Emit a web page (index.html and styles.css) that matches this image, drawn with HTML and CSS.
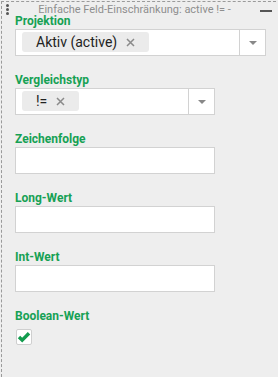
FILE: index.html
```html
<!DOCTYPE html>
<html>
	<head>
		<meta charset="utf-8">
		<link rel="stylesheet" href="styles.css">
	</head>
	<body>
		<div class="panel">
			<div class="head">
				<span class="grip"><i></i><i></i><i></i></span>
				<div class="title">Einfache Feld-Einschränkung: active != -</div>
				<span class="minus"></span>
			</div>

			<div class="field">
				<div class="label">Projektion</div>
				<div class="select wide">
					<div class="chips">
						<span class="chip">Aktiv (active)<svg class="x" width="9" height="9" viewBox="0 0 9 9"><path d="M1 1 L8 8 M8 1 L1 8"/></svg></span>
					</div>
					<div class="arrow"><span></span></div>
				</div>
			</div>

			<div class="field">
				<div class="label">Vergleichstyp</div>
				<div class="select">
					<div class="chips">
						<span class="chip">!=<svg class="x" width="9" height="9" viewBox="0 0 9 9"><path d="M1 1 L8 8 M8 1 L1 8"/></svg></span>
					</div>
					<div class="arrow"><span></span></div>
				</div>
			</div>

			<div class="field">
				<div class="label">Zeichenfolge</div>
				<input class="text" type="text">
			</div>

			<div class="field">
				<div class="label">Long-Wert</div>
				<input class="text" type="text">
			</div>

			<div class="field">
				<div class="label">Int-Wert</div>
				<input class="text" type="text">
			</div>

			<div class="field">
				<div class="label">Boolean-Wert</div>
				<div class="check">
					<svg width="14" height="14" viewBox="0 0 14 14">
						<path d="M2 7 L5.2 10.2 L12 3.2" fill="none" stroke="#129c4e" stroke-width="3.4"/>
					</svg>
				</div>
			</div>
		</div>
	</body>
</html>
```

FILE: styles.css
```css
html, body {
	margin: 0;
	height: 100%;
}

body {
	font-family: Roboto, "Liberation Sans", sans-serif;
	background: #eeeeee;
}

.panel {
	margin-left: 1px;
	margin-top: 1px;
	height: 376px;
	box-sizing: border-box;
	border-left: 1px dashed #9a9a9a;
	border-top: 1px dashed #9a9a9a;
	background: #eeeeee;
	padding-left: 13px;
	margin-right: 2px;
}

.head {
	position: relative;
	height: 11px;
}

.title {
	font-size: 11px;
	line-height: 12px;
	padding-top: 2px;
	color: #8e8e8e;
	text-align: center;
	padding-right: 30px;
	padding-left: 8px;
	white-space: nowrap;
}

/* drag handle */
.grip {
	position: absolute;
	left: -9px;
	top: 2px;
	width: 3px;
}
.grip i {
	display: block;
	width: 3px;
	height: 3px;
	border-radius: 50%;
	background: #555;
	margin-bottom: 1px;
}

.minus {
	position: absolute;
	right: 4px;
	top: 8px;
	width: 12px;
	height: 2px;
	background: #555;
}

.field {
	margin-bottom: 16px;
}

.label {
	font-size: 12px;
	line-height: 16px;
	font-weight: bold;
	color: #16a154;
}

.select {
	display: flex;
	width: 200px;
	height: 27px;
	box-sizing: border-box;
	border: 1px solid #d2d2d2;
	background: #fff;
}
.select.wide {
	width: 251px;
}

.chips {
	flex: 1;
	padding: 2px 0 0 6px;
}

.chip {
	display: inline-flex;
	align-items: center;
	height: 20px;
	padding: 0 14px;
	border-radius: 3px;
	background: #ebebeb;
	font-size: 14px;
	color: #222;
}
.chip .x {
	margin-left: 9px;
	fill: none;
	stroke: #8a8a8a;
	stroke-width: 1.5;
}

.arrow {
	width: 25px;
	border-left: 1px solid #d2d2d2;
	display: flex;
	align-items: center;
	justify-content: center;
}
.arrow span {
	width: 0;
	height: 0;
	border-left: 4px solid transparent;
	border-right: 4px solid transparent;
	border-top: 4px solid #888;
	margin-top: 1px;
}

input.text {
	display: block;
	width: 200px;
	height: 27px;
	box-sizing: border-box;
	border: 1px solid #d2d2d2;
	background: #fff;
	margin: 0;
	padding: 0 4px;
	outline: none;
}

.check {
	margin-top: 5px;
	margin-left: 1px;
	width: 16px;
	height: 16px;
	box-sizing: border-box;
	border: 1px solid #cfcfcf;
	border-radius: 2px;
	background: #fff;
	display: flex;
	align-items: center;
	justify-content: center;
}
```
